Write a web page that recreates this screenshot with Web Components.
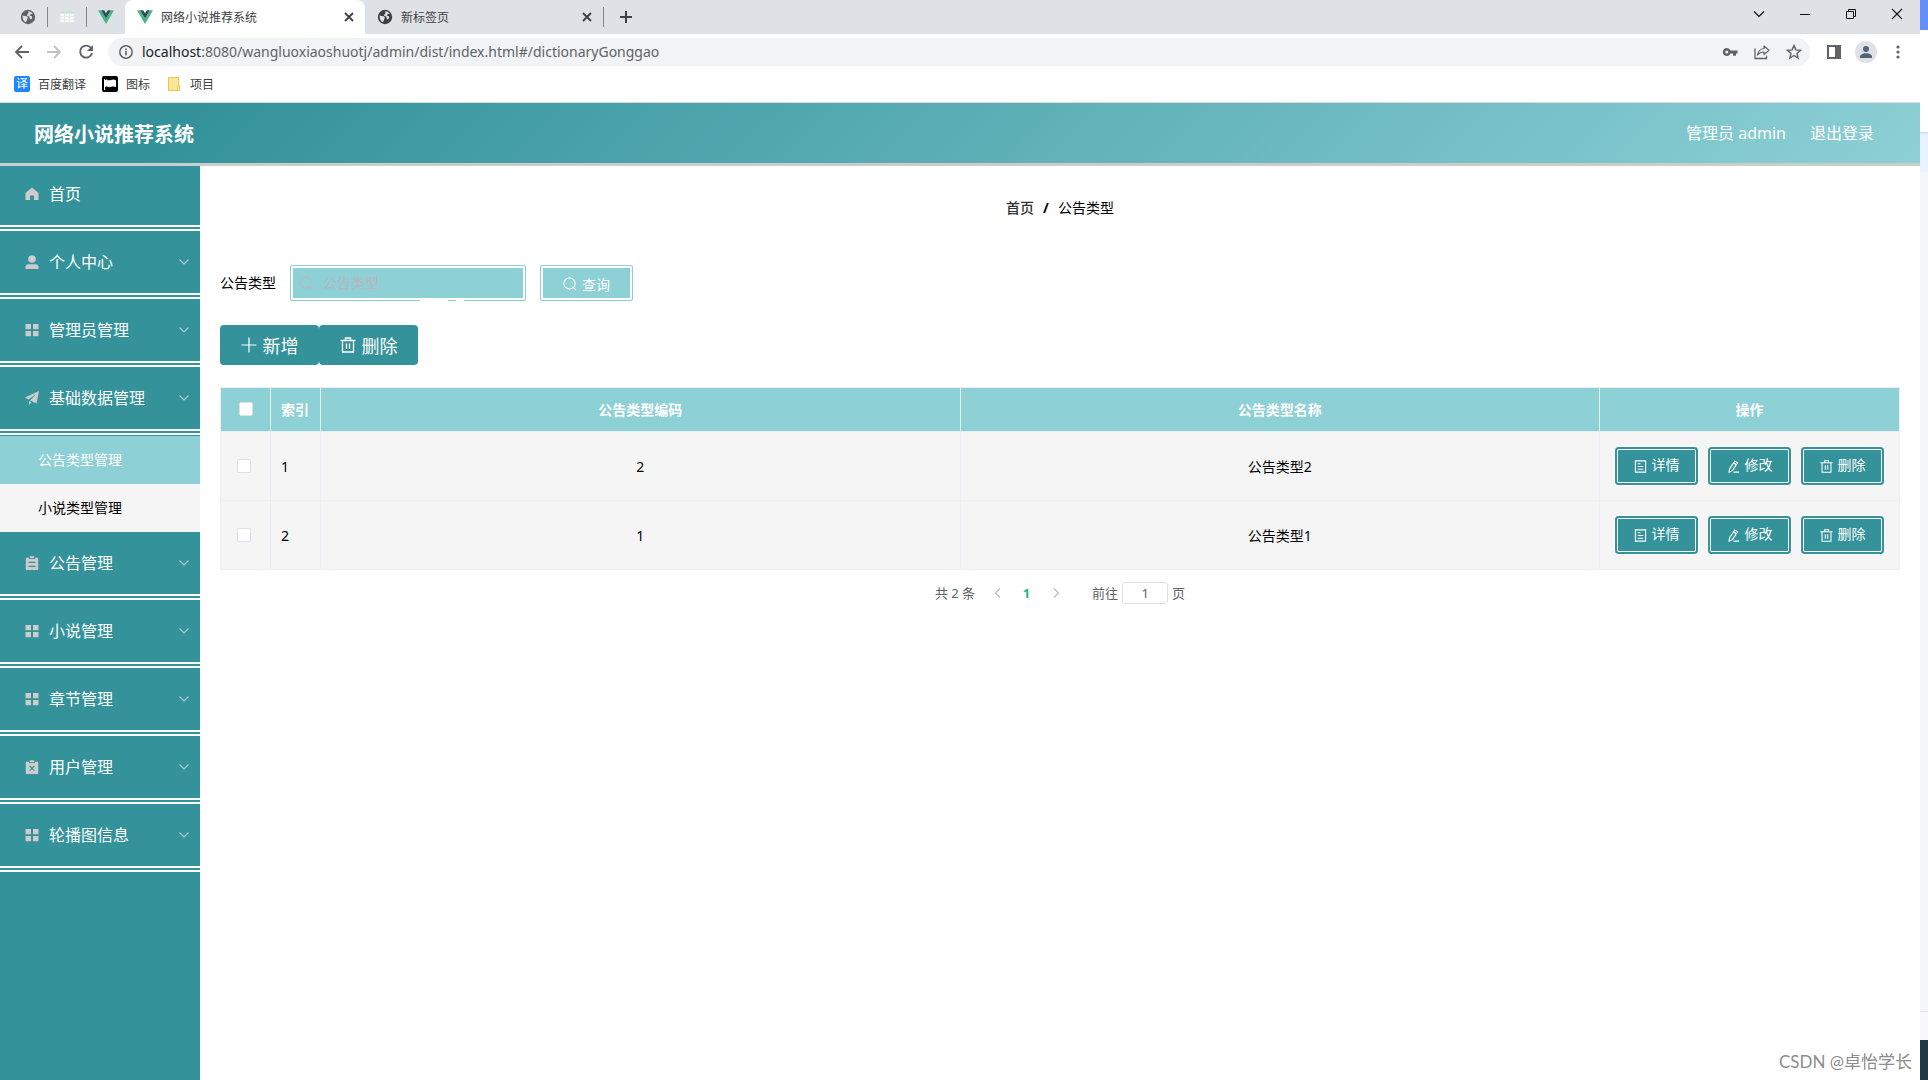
<!DOCTYPE html>
<html lang="zh-CN">
<head>
<meta charset="utf-8">
<title>网络小说推荐系统</title>
<style>
html, body { margin: 0; height: 100%; }
body {
  --teal: #33929a;
  --aqua: #8dd0d6;
  --line: #ebeef5;
  font-family: "Noto Sans", "Noto Sans CJK SC", sans-serif;
  font-size: 14px;
  color: #000;
  background: #fff;
}
</style>
</head>
<body>
<desktop-screen></desktop-screen>
<script>
const ICONS = {
  globe: ['0 0 16 16', '<circle cx="8" cy="8" r="7.2" fill="currentColor"/><path d="M2.6 6.6l3.6.6c1.4.3 2 1.3 1.2 2.5-.5.8-.2 1.5-1 2.6l-.8 1C3.600 12.200 2.400 10 2.600 6.600zM8 2.300c1.900-.1 3.700 1 4.700 2.500l-1.900.3-1.200 1.300 2.300.9.300 1.600-1.400 1.700-1.300-1.300-.1-1.700-2.200-.7.1-1.600 1.300-.8z" fill="#dee1e6"/>'],
  sheet: ['0 0 16 16', '<path d="M1 2.500h14v11H1z" fill="#f8faf8" stroke="#e4e8e5"/><path d="M1 2.500h14v2H1z" fill="#c4e2ca"/><path d="M1 7.500h14M1 10.500h14M5.500 4.500v9M10.500 4.500v9" stroke="#e6eae7"/>'],
  vue: ['0 0 16 16', '<path d="M0 1.200h3.200L8 9.500l4.800-8.300H16L8 15z" fill="#41b883"/><path d="M3.200 1.200h3L8 4.300l1.800-3.100h3L8 9.500z" fill="#34495e"/>'],
  close: ['0 0 16 16', '<path d="M4 4l8 8M12 4l-8 8" stroke="currentColor" stroke-width="1.800"/>'],
  plusBold: ['0 0 16 16', '<path d="M8 2v12M2 8h12" stroke="currentColor" stroke-width="2"/>'],
  caret: ['0 0 16 16', '<path d="M3 5.500l5 5 5-5" fill="none" stroke="currentColor" stroke-width="1.200"/>'],
  min: ['0 0 16 16', '<path d="M3 8.500h10" stroke="currentColor"/>'],
  restore: ['0 0 16 16', '<path d="M3.500 5.500h7v7h-7zM5.500 5.500v-2h7v7h-2" fill="none" stroke="currentColor"/>'],
  shut: ['0 0 16 16', '<path d="M3 3l10 10M13 3L3 13" stroke="currentColor" stroke-width="1.100"/>'],
  back: ['0 0 16 16', '<path d="M15 8H2.500M8 2L2 8l6 6" fill="none" stroke="currentColor" stroke-width="1.800"/>'],
  forward: ['0 0 16 16', '<path d="M1 8h12.500M8 2l6 6-6 6" fill="none" stroke="currentColor" stroke-width="1.800"/>'],
  reload: ['0 0 16 16', '<path d="M13.300 4.500A6 6 0 1 0 14 9" fill="none" stroke="currentColor" stroke-width="1.900"/><path d="M15 1v6H9z" fill="currentColor"/>'],
  info: ['0 0 16 16', '<circle cx="8" cy="8" r="6.200" fill="none" stroke="currentColor" stroke-width="1.500"/><path d="M8 7v4.300M8 4.600v1.600" stroke="currentColor" stroke-width="1.600"/>'],
  key: ['0 0 16 16', '<path fill-rule="evenodd" d="M4.800 4a4 4 0 0 1 3.700 2.600H15.500v3H14v2.200h-3V9.600H8.500A4 4 0 1 1 4.800 4zm0 2.500a1.500 1.500 0 1 0 0 3 1.500 1.500 0 0 0 0-3z" fill="currentColor"/>'],
  share: ['0 0 16 16', '<path d="M1 4.500v10h11.500v-3" fill="none" stroke="currentColor" stroke-width="1.300"/><path d="M10 2l5 4.300-5 4.200V8C7 8 5 9 3.500 11 4 7.500 6 5 10 4.500z" fill="none" stroke="currentColor" stroke-width="1.200" stroke-linejoin="round"/>'],
  star: ['0 0 16 16', '<path d="M8 1.600l1.900 4.300 4.700.4-3.600 3.100 1.100 4.600L8 11.500 3.900 14 5 9.400 1.400 6.300l4.700-.4z" fill="none" stroke="currentColor" stroke-width="1.400"/>'],
  panel: ['0 0 16 16', '<path fill-rule="evenodd" d="M1 1h14v14H1zM3 3v10h6V3z" fill="currentColor"/>'],
  person: ['0 0 22 22', '<circle cx="11" cy="11" r="11" fill="#dee1e6"/><circle cx="11" cy="8" r="3" fill="currentColor"/><path d="M5 17v-1.500c0-2 3-3.300 6-3.300s6 1.300 6 3.300V17z" fill="currentColor"/>'],
  dots: ['0 0 16 16', '<circle cx="8" cy="3" r="1.600" fill="currentColor"/><circle cx="8" cy="8" r="1.600" fill="currentColor"/><circle cx="8" cy="13" r="1.600" fill="currentColor"/>'],
  flag: ['0 0 16 16', '<rect width="16" height="16" rx="2" fill="#000"/><path d="M2.500 3v11M3 4.500c2-1.500 3 .8 5 .3s3-1.300 5.500-.3v6c-2.500-1-3.500-.3-5.500.2s-3-1.700-5-.2z" fill="#fff" stroke="#fff"/>'],
  folder: ['0 0 16 16', '<path d="M2.500 1.500h10v8h1v5h-11z" fill="#ffe694" stroke="#eac54f"/><path d="M11.500 14.500v-4l2-1v5z" fill="#fff3c4" stroke="#eac54f"/>'],
  home: ['0 0 14 14', '<path d="M7 .6L13.500 6v7H9V8.500H5V13H.500V6z" fill="currentColor"/>'],
  user: ['0 0 14 14', '<circle cx="7" cy="4" r="3.800" fill="currentColor"/><path d="M.500 14v-2c0-1.800 1.200-2.800 3-2.800h7c1.800 0 3 1 3 2.800v2z" fill="currentColor"/>'],
  grid: ['0 0 14 14', '<path d="M.500 1h5.500v5.200H.500zM8 1h5.500v5.200H8zM.500 8h5.500v5.200H.500zM8 8h5.500v5.200H8z" fill="currentColor"/>'],
  plane: ['0 0 14 14', '<path d="M14 0L0 6.500l3.500 2L11 3 5 9.500l6.500 3zM4 10v4l2.500-2.700z" fill="currentColor"/>'],
  clip: ['0 0 14 14', '<path fill-rule="evenodd" d="M.800 1.800H4V3h6V1.800h3.200V14H.800zM3.500 5.800v1.100h7V5.800zM3.500 9.800v1.100h7V9.800z" fill="currentColor"/><path d="M4.800.2h4.400v2H4.800z" fill="currentColor"/>'],
  clipx: ['0 0 14 14', '<path d="M.800 1.800H4V3h6V1.800h3.200V14H.800zM4.800.2h4.400v2H4.800z" fill="currentColor"/><path d="M4.700 6l4.600 4.600M9.300 6l-4.600 4.600" stroke="#33929a" stroke-width="1.200"/>'],
  down: ['0 0 12 12', '<path d="M1.500 3.500L6 8l4.500-4.500" fill="none" stroke="currentColor" stroke-width="1.100"/>'],
  search: ['0 0 14 14', '<circle cx="6.500" cy="6.500" r="5.600" fill="none" stroke="currentColor" stroke-width="1.100"/><path d="M10.500 10.500l2.500 2.500" stroke="currentColor" stroke-width="1.100"/>'],
  plus: ['0 0 16 16', '<path d="M8 .500v15M.500 8h15" stroke="currentColor" stroke-width="1.200"/>'],
  trash: ['0 0 16 16', '<path d="M.500 3.500h15M5.500 3V1h5v2M2.500 3.500v11.500h11V3.500M6.500 6.500v5.500M9.500 6.500v5.500" fill="none" stroke="currentColor" stroke-width="1.300"/>'],
  doc: ['0 0 14 14', '<path d="M1.500 1h11v12h-11zM4 4h3M4 7h6M4 10h6" fill="none" stroke="currentColor" stroke-width="1.200"/>'],
  edit: ['0 0 14 14', '<path d="M8.500 1.200l3 1.800-5.700 8.500-3.600 1.700.6-3.900zM7.300 3.300l2.800 1.800M7 13h6" fill="none" stroke="currentColor" stroke-width="1.200"/>'],
  prev: ['0 0 12 12', '<path d="M8 1.500L3.500 6 8 10.500" fill="none" stroke="currentColor" stroke-width="1.500"/>'],
  next: ['0 0 12 12', '<path d="M4 1.500L8.500 6 4 10.500" fill="none" stroke="currentColor" stroke-width="1.500"/>']
};

function define(name, css, html) {
  customElements.define(name, class extends HTMLElement {
    constructor() {
      super();
      const t = document.createElement('template');
      t.innerHTML = `<style>*{box-sizing:border-box}button,input{font:inherit;margin:0}a{color:inherit;text-decoration:none}${css}</style>` +
        (typeof html === 'function' ? html(this) : html);
      this.attachShadow({ mode: 'open' }).append(t.content.cloneNode(true));
    }
  });
}

define('ui-icon', ':host{display:inline-flex;width:16px;height:16px;flex:none}svg{width:100%;height:100%;display:block}', el => {
  const [box, body] = ICONS[el.getAttribute('name')];
  return `<svg viewBox="${box}" aria-hidden="true">${body}</svg>`;
});

/* ---------- browser frame ---------- */
define('browser-tab', `
  :host{display:flex;align-items:center;box-sizing:border-box;width:240px;height:34px;padding:0 8px 0 12px;gap:8px;color:#3c4043;font-size:12px}
  :host([active]){background:#fff;border-radius:8px 8px 0 0}
  span{flex:1}
  button{border:0;background:none;padding:0;display:flex;color:#3c4043}
  ui-icon{width:16px;height:16px}`,
  el => `<ui-icon name="${el.getAttribute('icon')}"></ui-icon><span><slot></slot></span><button aria-label="关闭"><ui-icon name="close"></ui-icon></button>`);

define('tab-strip', `
  :host{display:flex;height:34px;background:#dee1e6;color:#5f6368}
  .pins{display:flex;align-items:center;width:125px;padding:0 0 0 20px;height:34px;gap:11px}
  i{flex:none;width:1px;height:20px;background:#80868b}
  .end{display:flex;align-items:center;height:34px;gap:14px}
  button{border:0;background:none;padding:0;display:flex;color:#3c4043}
  .win{margin-left:auto;display:flex;align-items:center;height:28px;gap:30px;padding-right:15px}
  .win button{color:#111}
  browser-tab:nth-of-type(2){width:238px}`, `
  <div class="pins"><ui-icon name="globe"></ui-icon><i></i><ui-icon name="sheet"></ui-icon><i></i><ui-icon name="vue"></ui-icon></div>
  <browser-tab icon="vue" active>网络小说推荐系统</browser-tab>
  <browser-tab icon="globe">新标签页</browser-tab>
  <div class="end"><i></i><button aria-label="新建标签页"><ui-icon name="plusBold"></ui-icon></button></div>
  <div class="win"><button aria-label="搜索标签页"><ui-icon name="caret"></ui-icon></button><button aria-label="最小化"><ui-icon name="min"></ui-icon></button><button aria-label="还原"><ui-icon name="restore"></ui-icon></button><button aria-label="关闭"><ui-icon name="shut"></ui-icon></button></div>`);

define('address-bar', `
  :host{display:flex;align-items:center;height:36px;padding:0 14px;gap:16px;color:#5f6368;background:#fff}
  button{border:0;background:none;padding:0;display:flex;color:inherit}
  .off{color:#bdc1c6}
  .box{flex:1;display:flex;align-items:center;height:28px;margin:0 0 0 -2px;padding:0 8px 0 10px;background:#f1f3f4;border-radius:14px;gap:16px}
  .url{flex:1;margin-left:-8px;white-space:nowrap;line-height:20px}
  b{font-weight:400;color:#202124}
  .who{width:22px;height:22px;color:#56617a}
  .tools{display:flex;align-items:center;gap:13px}`, `
  <button aria-label="后退"><ui-icon name="back"></ui-icon></button>
  <button class="off" aria-label="前进"><ui-icon name="forward"></ui-icon></button>
  <button aria-label="重新加载"><ui-icon name="reload"></ui-icon></button>
  <div class="box"><ui-icon name="info"></ui-icon><span class="url"><b>localhost</b>:8080/wangluoxiaoshuotj/admin/dist/index.html#/dictionaryGonggao</span>
  <ui-icon name="key"></ui-icon><ui-icon name="share"></ui-icon><ui-icon name="star"></ui-icon></div>
  <div class="tools"><ui-icon name="panel"></ui-icon><ui-icon class="who" name="person"></ui-icon><ui-icon name="dots"></ui-icon></div>`);

define('bookmark-bar', `
  :host{display:flex;align-items:center;height:33px;padding:0 14px 4px;gap:16px;font-size:12px;color:#3c4043;background:#fff;border-bottom:1px solid #dadce0}
  a{display:flex;align-items:center;gap:8px}
  em{width:16px;height:16px;border-radius:2px;background:#1a88ff;color:#fff;font-style:normal;line-height:16px;text-align:center}`, `
  <a href="#"><em>译</em>百度翻译</a><a href="#"><ui-icon name="flag"></ui-icon>图标</a><a href="#"><ui-icon name="folder"></ui-icon>项目</a>`);

/* ---------- admin application ---------- */
define('site-header', `
  :host{display:flex;align-items:center;justify-content:space-between;height:60px;padding:0 46px 0 34px;position:relative;z-index:1;color:#fff;font-size:16px;
    background:linear-gradient(135deg,#33929a 10%,#8dd0d6);box-shadow:0 3px 0 #ccc}
  h1{margin:0;padding-top:3px;font-size:20px;line-height:28px}
  div{display:flex;gap:24px;line-height:22px}`, `
  <h1>网络小说推荐系统</h1><div><span>管理员 admin</span><a href="#">退出登录</a></div>`);

define('nav-item', `
  :host{display:block;background:var(--teal)}
  a{display:flex;align-items:center;height:62px;padding:0 10px 0 25px;color:#fff;font-size:16px}
  a ui-icon{width:14px;height:14px;color:#ccc}
  span{flex:1;padding-left:10px;line-height:22px}
  a .arrow{width:12px;height:12px;color:#a9cfd3}
  hr{height:6px;margin:0;border:0;border-top:2px solid #fff;border-bottom:2px solid #fff}`,
  el => `<a href="#"><ui-icon name="${el.getAttribute('icon')}"></ui-icon><span><slot></slot></span>${el.hasAttribute('leaf') ? '' : '<ui-icon class="arrow" name="down"></ui-icon>'}</a><hr>`);

define('side-nav', `
  :host{display:block;width:200px;flex:none;background:var(--teal)}
  ul{list-style:none;margin:0;padding:1px 0 0}
  li{height:48px;line-height:48px;padding-left:38px;background:#f5f5f5}
  li.on{background:var(--aqua);color:#fff}`, `
  <nav>
  <nav-item icon="home" leaf>首页</nav-item>
  <nav-item icon="user">个人中心</nav-item>
  <nav-item icon="grid">管理员管理</nav-item>
  <nav-item icon="plane">基础数据管理</nav-item>
  <ul><li class="on"><a href="#">公告类型管理</a></li><li><a href="#">小说类型管理</a></li></ul>
  <nav-item icon="clip">公告管理</nav-item>
  <nav-item icon="grid">小说管理</nav-item>
  <nav-item icon="grid">章节管理</nav-item>
  <nav-item icon="clipx">用户管理</nav-item>
  <nav-item icon="grid">轮播图信息</nav-item>
  </nav>`);

define('search-form', `
  :host{display:block}
  form{display:flex;align-items:center}
  label{margin-right:14px;line-height:20px}
  .field{position:relative;display:flex;width:236px;margin-right:14px}
  .field ui-icon{position:absolute;left:9px;top:11px;width:14px;height:14px;color:#b4b9c4}
  input{width:100%;height:36px;padding:0 12px 2px 32px;border:1px solid var(--aqua);border-radius:2px;background:var(--aqua);box-shadow:inset 0 0 0 2px #fff;outline:0}
  input::placeholder{color:#b9b6c0;opacity:1}
  .field::before,.field::after{content:"";position:absolute;bottom:0;height:2px;background:#fff}
  .field::before{left:130px;width:28px}
  .field::after{left:166px;width:8px}
  button{display:flex;align-items:center;justify-content:center;gap:5px;width:93px;height:36px;padding:2px 0 0;border:1px solid var(--aqua);border-radius:2px;background:var(--aqua);box-shadow:inset 0 0 0 2px #fff;color:#fff}
  button ui-icon{width:14px;height:14px}`, `
  <form><label for="kind">公告类型</label><div class="field"><ui-icon name="search"></ui-icon><input id="kind" type="text" placeholder="公告类型"></div>
  <button type="button"><ui-icon name="search"></ui-icon>查询</button></form>`);

define('tool-button', `
  :host{display:block}
  button{display:flex;align-items:center;justify-content:center;gap:6px;width:99px;height:40px;padding:0;border:0;border-radius:4px;background:var(--teal);color:#fff;font-size:18px}`,
  el => `<button type="button"><ui-icon name="${el.getAttribute('icon')}"></ui-icon><slot></slot></button>`);

define('row-button', `
  :host{display:block}
  button{display:flex;align-items:center;justify-content:center;gap:5px;width:83px;height:38px;padding:0;border:0;border-radius:4px;background:var(--teal);color:#fff;
    box-shadow:inset 0 0 0 2px var(--teal),inset 0 0 0 3px #fff,0 0 0 1px #fff}
  span{line-height:20px;padding-bottom:2px}
  ui-icon{width:13px;height:13px}`,
  el => `<button type="button"><ui-icon name="${el.getAttribute('icon')}"></ui-icon><span><slot></slot></span></button>`);

const row = (n, code, name) => `<tr><td class="pick"><input type="checkbox" aria-label="选择 ${n}"></td><td class="idx">${n}</td><td>${code}</td><td>${name}</td>
  <td><div><row-button icon="doc">详情</row-button><row-button icon="edit">修改</row-button><row-button icon="trash">删除</row-button></div></td></tr>`;

define('type-table', `
  :host{display:block}
  table{width:100%;table-layout:fixed;border-collapse:collapse}
  th,td{border:1px solid var(--line);padding:0;text-align:center}
  th{height:44px;padding-bottom:1px;background:var(--aqua);color:#fff;font-weight:700}
  td{height:69px;background:#f5f5f5}
  .idx{text-align:left;padding-left:10px}
  .c1,.c2{width:50px}.c5{width:300px}
  td.pick{padding-right:4px}
  div{display:flex;justify-content:center;gap:10px}
  input{appearance:none;display:block;width:14px;height:14px;margin:0 auto;border:1px solid #dcdfe6;border-radius:2px;background:#fff}`, `
  <table><colgroup><col class="c1"><col class="c2"><col><col><col class="c5"></colgroup>
  <thead><tr><th><input type="checkbox" aria-label="全选"></th><th class="idx">索引</th><th>公告类型编码</th><th>公告类型名称</th><th>操作</th></tr></thead>
  <tbody>${row(1, 2, '公告类型2')}${row(2, 1, '公告类型1')}</tbody></table>`);

define('page-pager', `
  :host{display:flex;justify-content:center;align-items:center;font-size:13px;line-height:22px;color:#606266}
  button{border:0;padding:0;background:none;width:29px;height:22px;display:flex;align-items:center;justify-content:center;color:#c0c4cc}
  button ui-icon{width:12px;height:12px}
  .on{color:#18b690;font-weight:700}
  .sum{margin-right:8px}
  label{margin-left:22px;display:flex;align-items:center;gap:4px}
  input{width:46px;height:22px;border:1px solid #dcdfe6;border-radius:3px;text-align:center;color:#606266;padding:0;outline:0}`, `
  <span class="sum">共 2 条</span><button aria-label="上一页"><ui-icon name="prev"></ui-icon></button><button class="on">1</button><button aria-label="下一页"><ui-icon name="next"></ui-icon></button>
  <label><span>前往</span><input type="text" value="1"><span>页</span></label>`);

define('type-page', `
  :host{display:block;flex:1;min-width:0;padding:35px 20px 0;background:#fff}
  .crumb{display:flex;justify-content:center;gap:9px;line-height:20px;margin-bottom:47px}
  .crumb a{font-weight:500;color:#303133}
  .tools{display:flex;margin:24px 0 22px}
  page-pager{margin-top:12px}`, `
  <div class="crumb"><a href="#">首页</a><b>/</b><span>公告类型</span></div>
  <search-form></search-form>
  <div class="tools"><tool-button icon="plus">新增</tool-button><tool-button icon="trash">删除</tool-button></div>
  <type-table></type-table>
  <page-pager></page-pager>`);

/* ---------- desktop: browser window with a sliver of another window beside it ---------- */
define('desktop-screen', `
  :host{display:flex;height:100vh;overflow:hidden;position:relative}
  .window{flex:1;min-width:0;display:flex;flex-direction:column}
  .body{flex:1;display:flex;min-height:0}
  .behind{width:8px;display:flex;flex-direction:column;background:#f5f6f8}
  .behind i{display:block}
  .a{height:30px;background:#628ffa}.b{height:102px;background:#fff}.c{height:40px;background:#eaf1ff;box-shadow:inset 0 3px 3px -2px #cdd6e6}
  .d{flex:1;border-bottom:1px solid #e3e5ea}.e{height:28px;background:#f8f8fb}.f{height:40px;background:#203a43}
  .mark{position:absolute;right:16px;bottom:5px;font-family:Lato,"Noto Sans CJK SC",sans-serif;font-size:17px;line-height:26px;color:#8c8c8c;text-shadow:-1px -1px 0 #fff}`, `
  <div class="window"><tab-strip></tab-strip><address-bar></address-bar><bookmark-bar></bookmark-bar>
  <site-header></site-header><div class="body"><side-nav></side-nav><type-page></type-page></div></div>
  <div class="behind"><i class="a"></i><i class="b"></i><i class="c"></i><i class="d"></i><i class="e"></i><i class="f"></i></div>
  <div class="mark">CSDN @卓怡学长</div>`);
</script>
</body>
</html>
